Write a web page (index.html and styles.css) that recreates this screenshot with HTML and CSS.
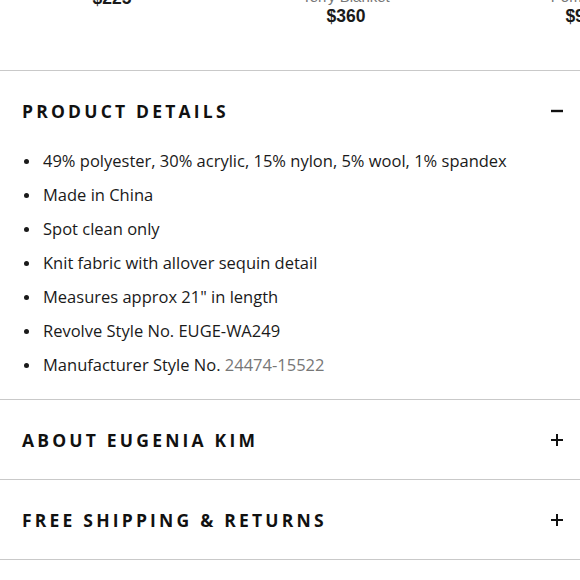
FILE: index.html
```html
<!DOCTYPE html>
<html lang="en">
<head>
<meta charset="utf-8">
<title>Product Details</title>
<link rel="stylesheet" href="styles.css">
</head>
<body>
<div class="carousel">
  <div class="card">
    <div class="card-name">Knit Beanie</div>
    <div class="card-price">$225</div>
  </div>
  <div class="card">
    <div class="card-name">Cashmere Wrap<br>Terry Blanket</div>
    <div class="card-price">$360</div>
  </div>
  <div class="card">
    <div class="card-name">Wool Scarf<br>Pom Hat</div>
    <div class="card-price">$98</div>
  </div>
</div>

<section class="accordion">
  <div class="acc-head">
    <h2 class="acc-title">PRODUCT DETAILS</h2>
    <svg class="acc-icon" width="12" height="12" viewBox="0 0 12 12"><path d="M0 6H12" stroke="#111" stroke-width="2.4"/></svg>
  </div>
  <ul class="details">
    <li>49% polyester, 30% acrylic, 15% nylon, 5% wool, 1% spandex</li>
    <li>Made in China</li>
    <li>Spot clean only</li>
    <li>Knit fabric with allover sequin detail</li>
    <li>Measures approx 21" in length</li>
    <li>Revolve Style No. EUGE-WA249</li>
    <li>Manufacturer Style No.&nbsp;<span class="muted">24474-15522</span></li>
  </ul>
</section>

<section class="accordion">
  <div class="acc-head">
    <h2 class="acc-title">ABOUT EUGENIA KIM</h2>
    <svg class="acc-icon" width="12" height="12" viewBox="0 0 12 12"><path d="M0 6H12M6 0V12" stroke="#111" stroke-width="2"/></svg>
  </div>
</section>

<section class="accordion">
  <div class="acc-head">
    <h2 class="acc-title">FREE SHIPPING &amp; RETURNS</h2>
    <svg class="acc-icon" width="12" height="12" viewBox="0 0 12 12"><path d="M0 6H12M6 0V12" stroke="#111" stroke-width="2"/></svg>
  </div>
</section>
</body>
</html>
```
FILE: styles.css
```css
html, body {
  margin: 0;
  padding: 0;
  background: #fff;
  overflow: hidden;
}
body {
  font-family: "Open Sans", "Noto Sans", sans-serif;
  color: #1a1a1a;
}
.carousel {
  display: flex;
  align-items: flex-start;
  margin-top: -30px;
  margin-left: -5px;
  padding-bottom: 43px;
}
.card {
  flex: 0 0 234px;
  text-align: center;
  font-family: "Liberation Sans", Arial, sans-serif;
}
.card-name {
  color: #777;
  font-size: 15px;
  line-height: 18px;
}
.card-price {
  color: #1a1a1a;
  font-weight: 700;
  font-size: 17.5px;
  line-height: 21px;
}
.accordion {
  border-top: 1px solid #c9c9c9;
}
.accordion:last-child {
  border-bottom: 1px solid #c9c9c9;
}
.acc-head {
  display: flex;
  align-items: center;
  justify-content: space-between;
  padding: 28px 17px 27px 22px;
}
.acc-title {
  margin: 0;
  font-size: 17.5px;
  line-height: 24px;
  font-weight: 700;
  letter-spacing: 3.2px;
  color: #111;
}
.acc-icon {
  display: block;
}
.details {
  list-style: none;
  margin: 0;
  padding: 0 0 23px 24px;
  display: flex;
  flex-direction: column;
  gap: 12px;
}
.details li {
  display: flex;
  align-items: center;
  font-size: 16.5px;
  line-height: 22px;
  color: #1a1a1a;
}
.details li::before {
  content: "";
  flex: 0 0 5px;
  width: 5px;
  height: 5px;
  border-radius: 50%;
  background: #1a1a1a;
  margin-right: 14px;
}
.muted {
  color: #777;
}
```
